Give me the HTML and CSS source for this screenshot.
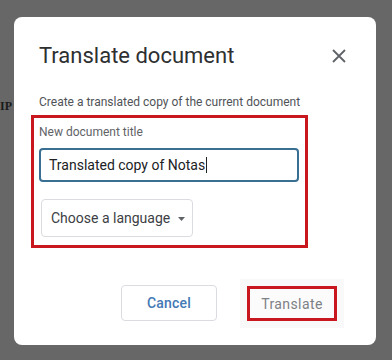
FILE: index.html
```html
<!DOCTYPE html>
<html>
<head>
<meta charset="utf-8">
<link rel="stylesheet" href="styles.css">
</head>
<body>
<div class="backdrop-text">IP</div>
<div class="dialog">
  <div class="header">
    <div class="title">Translate document</div>
    <svg class="close" width="14" height="14" viewBox="0 0 14 14"><path d="M1 1 L13 13 M13 1 L1 13" stroke="#5f6368" stroke-width="1.8" fill="none"/></svg>
  </div>
  <div class="subtitle">Create a translated copy of the current document</div>
  <div class="highlight">
    <div class="label">New document title</div>
    <div class="field"><span>Translated copy of Notas</span><span class="caret"></span></div>
    <div class="select">
      <span>Choose a language</span>
      <svg class="arrow" width="7" height="4" viewBox="0 0 7 4"><path d="M0 0 L7 0 L3.5 4 Z" fill="#5f6368"/></svg>
    </div>
  </div>
  <div class="actions">
    <div class="btn cancel">Cancel</div>
    <div class="btn translate">Translate</div>
  </div>
</div>
</body>
</html>
```
FILE: styles.css
```css
html, body {
  margin: 0;
  padding: 0;
}
body {
  width: 392px;
  height: 360px;
  background: #676767;
  font-family: Roboto, "Liberation Sans", sans-serif;
  position: relative;
  overflow: hidden;
}
.backdrop-text {
  padding-top: 99px;
  margin-left: 0;
  font-family: "Liberation Serif", serif;
  font-size: 12px;
  font-weight: bold;
  color: #1a1a1a;
  line-height: 14px;
}
.dialog {
  position: absolute;
  left: 14px;
  top: 17px;
  width: 362px;
  height: 328px;
  box-sizing: border-box;
  background: #fff;
  border-radius: 8px;
  padding: 25px 30px 24px 25px;
}
.header {
  display: flex;
  align-items: center;
  justify-content: space-between;
  height: 28px;
}
.title {
  font-size: 22px;
  line-height: 28px;
  color: #2e2f31;
}
.close {
  display: block;
}
.subtitle {
  margin-top: 24px;
  font-size: 12px;
  line-height: 16px;
  color: #4f5357;
}
.highlight {
  margin-top: 5px;
  margin-left: -8px;
  width: 277px;
  height: 133px;
  box-sizing: border-box;
  border: 3px solid #c8171e;
  padding: 6px 6px 0 5px;
}
.label {
  font-size: 12px;
  line-height: 16px;
  color: #5f6368;
}
.field {
  margin-top: 8px;
  height: 34px;
  box-sizing: border-box;
  border: 2px solid #3a6f94;
  border-radius: 4px;
  padding-left: 8px;
  display: flex;
  align-items: center;
  font-size: 14px;
  color: #202124;
}
.caret {
  display: inline-block;
  width: 1px;
  height: 16px;
  background: #202124;
  margin-left: 1px;
}
.select {
  margin-top: 17px;
  margin-left: 2px;
  width: 152px;
  height: 38px;
  box-sizing: border-box;
  border: 1px solid #dadce0;
  border-radius: 4px;
  padding-left: 9px;
  display: flex;
  align-items: center;
  font-size: 14px;
  color: #3c4043;
}
.arrow {
  display: block;
  margin-left: 8px;
  margin-top: 1px;
}
.actions {
  margin-top: 37px;
  margin-right: 9px;
  display: flex;
  justify-content: flex-end;
  align-items: flex-start;
  gap: 30px;
}
.btn {
  box-sizing: border-box;
  display: flex;
  align-items: center;
  justify-content: center;
  font-size: 14px;
  letter-spacing: 0.2px;
}
.cancel {
  width: 96px;
  height: 36px;
  border: 1px solid #dadce0;
  border-radius: 4px;
  color: #4379b4;
  font-weight: 500;
}
.translate {
  margin-top: 1px;
  width: 90px;
  height: 35px;
  border: 3px solid #c8171e;
  color: #7d8186;
  font-weight: 400;
  letter-spacing: 0.4px;
  background: #fbfbfb;
  box-shadow: 0 0 0 7px #f9f9f9;
}
```
